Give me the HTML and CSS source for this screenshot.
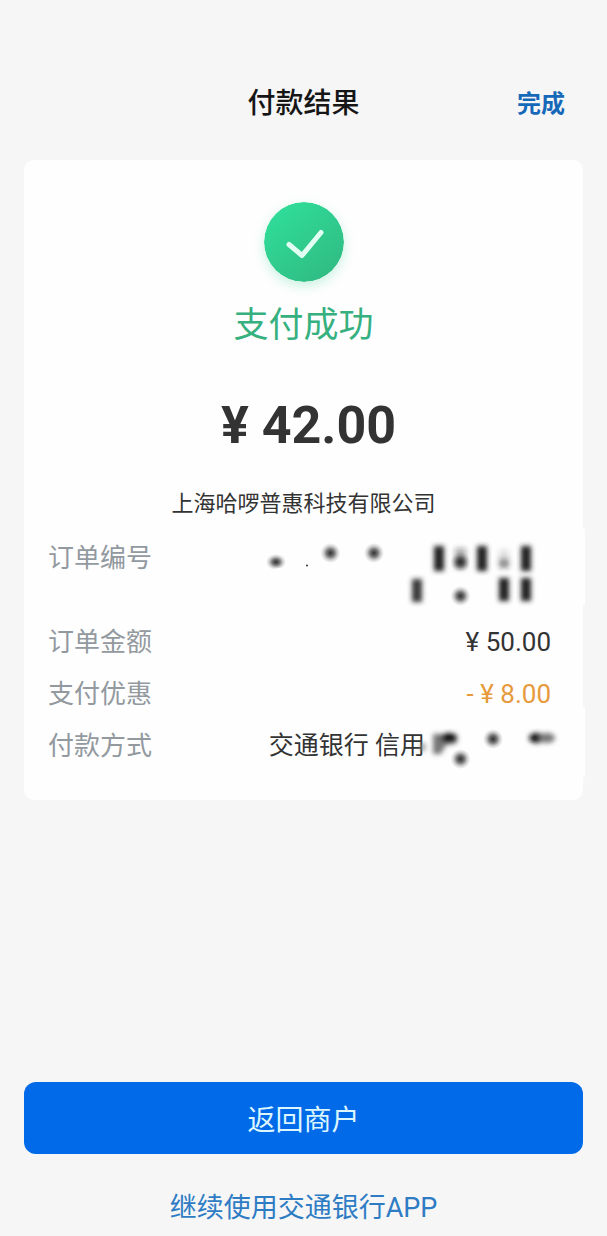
FILE: index.html
```html
<!DOCTYPE html>
<html lang="zh-CN">
<head>
<meta charset="utf-8">
<meta name="viewport" content="width=device-width, initial-scale=1">
<title>付款结果</title>
<link rel="stylesheet" href="styles.css">
</head>
<body>
<div class="page">
  <header class="header">
    <h1 class="title">付款结果</h1>
    <button class="done" type="button">完成</button>
  </header>
  <main class="card">
    <svg class="badge" viewBox="0 0 80 80" aria-hidden="true">
      <defs>
        <linearGradient id="green" x1="0.1" y1="0" x2="0.9" y2="1">
          <stop offset="0" stop-color="#30e09a"/>
          <stop offset="1" stop-color="#30b981"/>
        </linearGradient>
      </defs>
      <circle cx="40" cy="40" r="40" fill="url(#green)"/>
      <path d="M25 42.500L38 53.500L57 30.500" fill="none" stroke="#e2fff3" stroke-width="5" stroke-linecap="round" stroke-linejoin="round"/>
    </svg>
    <p class="status">支付成功</p>
    <p class="amount">¥ 42.00</p>
    <p class="merchant">上海哈啰普惠科技有限公司</p>
    <dl class="details">
      <div class="row">
        <dt class="label">订单编号</dt>
        <dd class="value">
          <svg class="mask-number" viewBox="261 533 290 84" role="img" aria-label="已隐藏">
            <defs>
              <radialGradient id="dot">
                <stop offset="0" stop-color="#333"/>
                <stop offset="0.350" stop-color="#333" stop-opacity="0.700"/>
                <stop offset="0.700" stop-color="#333" stop-opacity="0.220"/>
                <stop offset="1" stop-color="#333" stop-opacity="0"/>
              </radialGradient>
              <filter id="soft" x="-100%" y="-50%" width="300%" height="200%">
                <feGaussianBlur stdDeviation="2.500"/>
              </filter>
            </defs>
            <rect x="400" y="530" width="185" height="76" fill="#fefefe"/>
            <g fill="url(#dot)">
              <path d="M266 555H286V568L267 571Z"/>
              <circle cx="330.500" cy="554" r="10"/>
              <circle cx="374" cy="554" r="10"/>
              <circle cx="460.500" cy="563" r="10"/>
              <circle cx="460.500" cy="597" r="10"/>
            </g>
            <circle cx="307" cy="566.500" r="1" fill="#333"/>
            <g fill="#222" filter="url(#soft)">
              <rect x="434" y="547" width="10" height="25"/>
              <rect x="477" y="547" width="10" height="25"/>
              <rect x="521" y="547" width="10" height="25"/>
              <rect x="412" y="580" width="10" height="23" opacity="0.900"/>
              <rect x="499" y="579" width="10" height="23"/>
              <rect x="521" y="579" width="10" height="23"/>
              <rect x="455" y="549" width="11" height="21" opacity="0.350"/>
              <rect x="499" y="551" width="10" height="9" opacity="0.150"/>
              <rect x="499" y="560" width="10" height="9" opacity="0.500"/>
            </g>
          </svg>
        </dd>
      </div>
      <div class="row">
        <dt class="label">订单金额</dt>
        <dd class="value">¥ 50.00</dd>
      </div>
      <div class="row">
        <dt class="label">支付优惠</dt>
        <dd class="value discount">- ¥ 8.00</dd>
      </div>
      <div class="row">
        <dt class="label">付款方式</dt>
        <dd class="value method">
          <span>交通银行 信用</span>
          <svg class="mask-card" viewBox="425 719 126 52" role="img" aria-label="已隐藏">
            <rect x="427" y="706" width="158" height="70" fill="#fefefe"/>
            <g filter="url(#soft)">
              <path d="M433 733H457V742L446 744L441 753H433Z" fill="#777"/>
              <ellipse cx="449" cy="737" rx="8" ry="5" fill="#111"/>
              <rect x="421" y="742" width="4" height="8" fill="#888"/>
              <ellipse cx="537" cy="737" rx="8" ry="5" fill="#111"/>
              <ellipse cx="547" cy="737" rx="8" ry="5" fill="#777"/>
            </g>
            <g fill="url(#dot)">
              <circle cx="460.500" cy="758" r="10"/>
              <circle cx="493" cy="738" r="10"/>
            </g>
          </svg>
        </dd>
      </div>
    </dl>
  </main>
  <footer class="footer">
    <button class="primary" type="button">返回商户</button>
    <a class="link" href="#">继续使用交通银行APP</a>
  </footer>
</div>
</body>
</html>
```
FILE: styles.css
```css
* {
  box-sizing: border-box;
}

body {
  margin: 0;
  background: #f6f6f6;
  color: #333;
  font-family: Roboto, "Noto Sans CJK SC", sans-serif;
}

.page {
  display: flex;
  flex-direction: column;
  min-height: 100vh;
  padding: 82px 24px 8px;
}

.header {
  display: grid;
  grid-template-columns: 1fr auto 1fr;
  align-items: center;
  height: 44px;
  padding: 0 18px;
}

.title {
  grid-column: 2;
  margin: 0;
  color: #161616;
  font-size: 28px;
  font-weight: 500;
  line-height: 44px;
}

.done {
  justify-self: end;
  padding: 0;
  border: 0;
  background: none;
  color: #1668b8;
  font: inherit;
  font-size: 24px;
  font-weight: 700;
  line-height: 44px;
}

.card {
  display: flex;
  flex-direction: column;
  align-items: center;
  margin-top: 34px;
  padding: 42px 24px 28px;
  border-radius: 10px;
  background: #fefefe;
}

.badge {
  width: 80px;
  height: 80px;
  border-radius: 50%;
  box-shadow: 0 4px 12px #30d09444;
}

.status,
.amount,
.merchant {
  margin: 0;
  text-align: center;
}

.status {
  margin-top: 18px;
  color: #35b07e;
  font-size: 35px;
  line-height: 52px;
}

.amount {
  margin-top: 42px;
  padding-left: 10px;
  font-size: 52px;
  font-weight: 700;
  line-height: 64px;
}

.merchant {
  margin-top: 30px;
  font-size: 22px;
  line-height: 32px;
}

.details {
  align-self: stretch;
  margin: 12px 0 0;
  padding-right: 8px;
  font-size: 26px;
  line-height: 52px;
}

.row {
  display: flex;
  justify-content: space-between;
}

.label {
  color: #92999f;
}

.value {
  display: flex;
  margin: 0;
}

.discount {
  color: #e79a3c;
}

.method {
  font-size: 25px;
}

.mask-number {
  width: 290px;
  height: 84px;
  overflow: visible;
}

.mask-card {
  width: 126px;
  height: 52px;
  overflow: visible;
}

.footer {
  display: flex;
  flex-direction: column;
  align-items: center;
  gap: 34px;
  margin-top: auto;
}

.primary {
  align-self: stretch;
  height: 72px;
  border: 0;
  border-radius: 12px;
  background: #006ae8;
  color: #dcf6ff;
  font: inherit;
  font-size: 28px;
}

.link {
  color: #2e7cc4;
  font-size: 27px;
  line-height: 40px;
  text-decoration: none;
}
```
